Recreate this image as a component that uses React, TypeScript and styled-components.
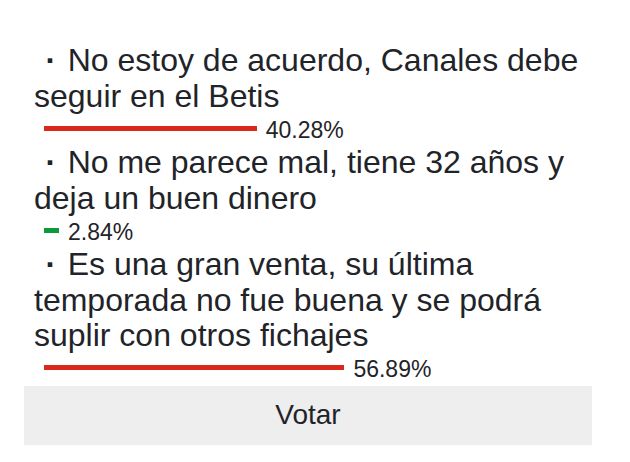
import React from 'react';
import styled, {createGlobalStyle} from 'styled-components';

type OptionType = {
    text: string
    percent: number
    color: string
}

const options: Array<OptionType> = [
    {text: 'No estoy de acuerdo, Canales debe seguir en el Betis', percent: 40.28, color: '#d9291c'},
    {text: 'No me parece mal, tiene 32 años y deja un buen dinero', percent: 2.84, color: '#0c9a3c'},
    {text: 'Es una gran venta, su última temporada no fue buena y se podrá suplir con otros fichajes', percent: 56.89, color: '#d9291c'},
]

const App = () => {
    return (
        <>
            <GlobalStyle/>
            <Poll>
                {options.map(o => (
                    <Option key={o.text}>
                        <OptionText>{o.text}</OptionText>
                        <ResultRow>
                            <Bar color={o.color} style={{width: `${o.percent}%`}}/>
                            <Percent>{o.percent.toFixed(2)}%</Percent>
                        </ResultRow>
                    </Option>
                ))}
                <VoteButton>Votar</VoteButton>
            </Poll>
        </>
    )
}

export default App

const GlobalStyle = createGlobalStyle`
  body {
    margin: 0;
    background: #ffffff;
    font-family: "Liberation Sans", Arial, sans-serif;
    color: #1f2429;
  }
`

const Poll = styled.div`
  width: 568px;
  margin-left: 24px;
  padding-top: 43px;
`

const Option = styled.div`
  display: flex;
  flex-direction: column;
`

// bullet drawn as a pseudo element so the label stays one text
const OptionText = styled.div`
  padding: 0 10px;
  font-size: 32px;
  line-height: 35.5px;

  &::before {
    content: "·";
    font-weight: bold;
    padding: 0 11.5px;
  }
`

const ResultRow = styled.div`
  display: flex;
  align-items: center;
  height: 31px;
  padding: 0 20px;
  white-space: nowrap;
`

const Bar = styled.div<{ color: string }>`
  height: 5px;
  flex-shrink: 0;
  margin-bottom: 3px;
  background: ${p => p.color};
`

const Percent = styled.span`
  margin-left: 9px;
  font-size: 23px;
  line-height: 31px;
  margin-top: 1px;
`

const VoteButton = styled.button`
  display: block;
  width: 100%;
  height: 59px;
  margin-top: 1px;
  border: none;
  background: #eeeeee;
  color: #1f2429;
  font-family: "Liberation Sans", Arial, sans-serif;
  font-size: 28px;
  padding: 0;
`
